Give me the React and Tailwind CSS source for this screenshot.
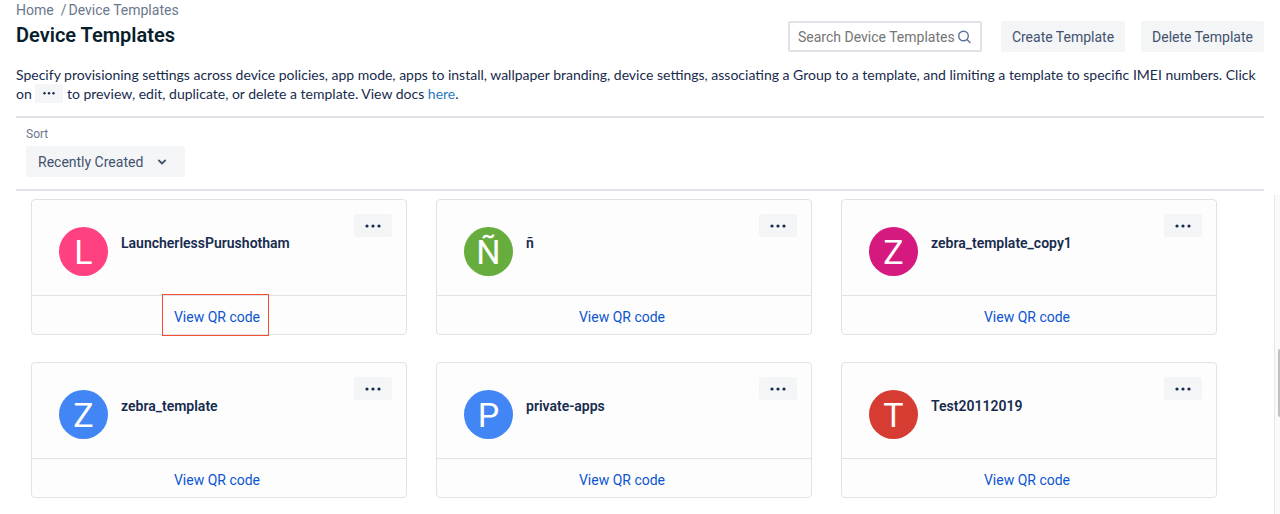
import React from "react";

const templates = [
  { name: "LauncherlessPurushotham", letter: "L", color: "bg-[#ff4081]", highlighted: true },
  { name: "ñ", letter: "Ñ", color: "bg-[#67ad3e]" },
  { name: "zebra_template_copy1", letter: "Z", color: "bg-[#d6197f]" },
  { name: "zebra_template", letter: "Z", color: "bg-[#4285f4]" },
  { name: "private-apps", letter: "P", color: "bg-[#4285f4]" },
  { name: "Test20112019", letter: "T", color: "bg-[#d73c32]" },
];

function Dots({ className = "w-4" }) {
  return (
    <svg viewBox="0 0 16 6" fill="currentColor" className={className} aria-hidden="true">
      <circle cx="2" cy="3" r="1.6" />
      <circle cx="8" cy="3" r="1.6" />
      <circle cx="14" cy="3" r="1.6" />
    </svg>
  );
}

function TemplateCard({ name, letter, color, highlighted }) {
  return (
    <article className="flex h-34 flex-col rounded border border-[#dfe3e7] bg-[#fdfdfe]">
      <div className="flex flex-1 items-start pt-[14px] pr-[14px] pl-[27px]">
        <div
          className={`mt-[13px] flex size-[49px] shrink-0 items-center justify-center rounded-full text-[34px] leading-none text-white ${color}`}
        >
          {letter}
        </div>
        <h2 className="mt-[19px] ml-[13px] flex-1 text-sm leading-5 font-semibold text-[#172b4d]">{name}</h2>
        <button
          type="button"
          aria-label={`Actions for ${name}`}
          className="flex h-[23px] w-[38px] items-center justify-center rounded-xs bg-[#f4f5f7] text-[#172b4d]"
        >
          <Dots />
        </button>
      </div>
      <div className="relative flex h-[39px] items-center justify-center border-t border-[#dfe3e7]">
        <button type="button" className="mt-1 mr-1 text-sm leading-5 text-[#0b55d0]">
          View QR code
        </button>
        {highlighted && (
          <span className="pointer-events-none absolute -top-[2px] -bottom-[2px] left-[130px] w-[107px] border border-[#f4502f]" />
        )}
      </div>
    </article>
  );
}

export default function App() {
  return (
    <div className="flex h-screen flex-col overflow-hidden bg-white font-['Roboto','Noto_Sans',sans-serif] text-sm text-[#172b4d]">
      <header className="shrink-0 px-4">
        <div className="flex items-start">
          <div className="flex-1">
            <nav aria-label="Breadcrumb" className="flex leading-5 text-[#6b778c]">
              <a href="#home">Home</a>
              <span className="mr-[2px] ml-[7px]">/</span>
              <a href="#device-templates">Device Templates</a>
            </nav>
            <h1 className="text-xl leading-[30px] font-semibold text-[#091e2c]">Device Templates</h1>
          </div>
          <div className="flex pt-[21px] text-[#42526e]">
            <label className="mr-[19px] flex h-[31px] w-[194px] items-center rounded-xs border-2 border-[#dfe3e7] pr-[9px] pl-2">
              <input
                type="text"
                aria-label="Search Device Templates"
                placeholder="Search Device Templates"
                className="w-full min-w-0 outline-none placeholder:text-[#757575]"
              />
              <svg
                width="14"
                height="14"
                viewBox="0 0 14 14"
                fill="none"
                stroke="#5e7396"
                strokeWidth="1.4"
                strokeLinecap="round"
                className="shrink-0"
                aria-hidden="true"
              >
                <circle cx="6.5" cy="6" r="4.8" />
                <path d="M10 9.5 13 12.5" />
              </svg>
            </label>
            <button type="button" className="mr-4 h-[31px] w-31 rounded-xs bg-[#f4f5f7]">
              Create Template
            </button>
            <button type="button" className="h-[31px] w-[123px] rounded-xs bg-[#f4f5f7]">
              Delete Template
            </button>
          </div>
        </div>
        <p className="mt-[13px] font-['Lato','Noto_Sans',sans-serif] leading-[19px]">
          Specify provisioning settings across device policies, app mode, apps to install, wallpaper branding, device
          settings, associating a Group to a template, and limiting a template to specific IMEI numbers. Click on{" "}
          <span className="inline-flex h-[19px] w-7 items-center justify-center rounded-xs bg-[#f4f5f7] align-top">
            <Dots className="w-3" />
          </span>{" "}
          to preview, edit, duplicate, or delete a template. View docs{" "}
          <a href="#docs" className="text-[#2a78c2]">
            here
          </a>
          .
        </p>
        <div className="mt-[13px] border-y-2 border-[#dfe3e7] px-[10px] pt-[6px] pb-3">
          <label htmlFor="sort" className="block text-xs leading-5 text-[#6b778c]">
            Sort
          </label>
          <div className="relative mt-[2px] w-[159px] text-[#42526e]">
            <select id="sort" className="block h-[31px] w-full appearance-none rounded-xs bg-[#f4f5f7] pr-8 pl-3">
              <option>Recently Created</option>
            </select>
            <svg
              width="10"
              height="8"
              viewBox="0 0 10 8"
              fill="none"
              stroke="currentColor"
              strokeWidth="1.8"
              strokeLinecap="round"
              strokeLinejoin="round"
              className="pointer-events-none absolute top-3 right-[18px]"
              aria-hidden="true"
            >
              <path d="M1.8 2.4 5 5.5 8.2 2.4" />
            </svg>
          </div>
        </div>
      </header>
      <main className="mt-1 flex min-h-0 flex-1">
        <div className="grid flex-1 grid-cols-3 content-start gap-x-[29px] gap-y-[27px] overflow-hidden pt-1 pr-[57px] pl-[31px]">
          {templates.map((t) => (
            <TemplateCard key={t.name} {...t} />
          ))}
        </div>
        <div className="flex w-[6px] justify-end border-l border-[#e8e8e8] bg-[#fafafa]" aria-hidden="true">
          <div className="mt-[154px] h-[68px] w-[2px] rounded-l-full bg-[#c1c1c1]" />
        </div>
      </main>
    </div>
  );
}
